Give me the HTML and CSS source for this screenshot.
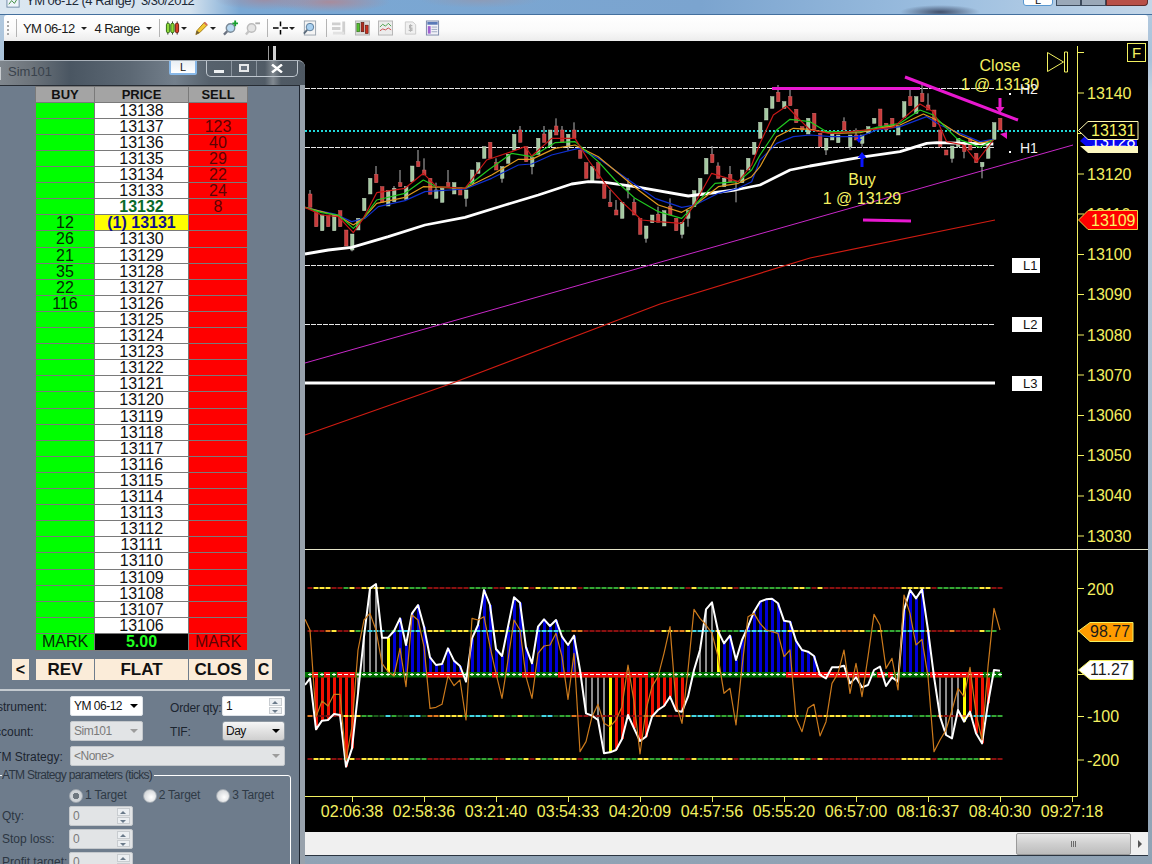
FILE: index.html
```html
<!DOCTYPE html>
<html lang="en">
<head>
    <meta charset="UTF-8">
    <title>YM 06-12 (4 Range) 3/30/2012</title>
    <link rel="stylesheet" href="styles.css">
</head>
<body>
    <div class="chart-window">
        <div class="title-bar">
            <svg class="title-icon" viewBox="0 0 16 16"><rect x="1" y="3" width="13" height="11" fill="#eef4fa" stroke="#6f8aa5"/><path d="M3 11l3-4 3 3 3-5" fill="none" stroke="#3a8a3a"/></svg>
            <span class="title-text">YM 06-12 (4 Range)&nbsp;&nbsp;3/30/2012</span>
        </div>
        <div class="toolbar">
            <span class="grip"></span>
            <span class="sep"></span>
            <span class="tb-text">YM 06-12</span><span class="caret"></span>
            <span class="tb-text tb-range">4 Range</span><span class="caret"></span>
            <span class="sep"></span>
            <svg class="icon" viewBox="0 0 16 16"><path d="M3 1v14M8 1v14M13 1v14" stroke="#333"/><rect x="1.5" y="3" width="3.5" height="10" rx="1.5" fill="#8fd83a" stroke="#2c6a10"/><rect x="6.2" y="3" width="3.5" height="10" rx="1.5" fill="#8fd83a" stroke="#2c6a10"/><rect x="11" y="3" width="3.5" height="10" rx="1.5" fill="#d8402a" stroke="#6a1608"/></svg><span class="caret caret-close"></span>
            <svg class="icon icon-gap" viewBox="0 0 16 16"><path d="M2 15l1-4 8-9 3 3-8 8z" fill="#f2c832" stroke="#a07a18"/><path d="M11 2l3 3" stroke="#d06a5a" stroke-width="2"/><path d="M2 15l1-4 3 2z" fill="#6a5a3a"/></svg><span class="caret caret-close"></span>
            <svg class="icon icon-gap" viewBox="0 0 16 16"><circle cx="8" cy="8" r="4.5" fill="#b8d8f0" stroke="#7a8a98" stroke-width="1.5"/><path d="M4.5 11.5L1 15" stroke="#6a7280" stroke-width="2.5"/><path d="M13 0v6M10 3h6" stroke="#18a030" stroke-width="2"/></svg>
            <svg class="icon icon-gap" viewBox="0 0 16 16"><circle cx="7" cy="8" r="4.5" fill="#e4e4e4" stroke="#bcbcbc" stroke-width="1.5"/><path d="M4 11.5L1 15" stroke="#c4c4c4" stroke-width="2.5"/><path d="M11 3h5" stroke="#b0b0b0" stroke-width="2"/></svg>
            <span class="sep"></span>
            <svg class="icon" viewBox="0 0 16 16"><path d="M0 8h6M10 8h6M8 1v5M8 10v5" stroke="#000" stroke-width="1.6"/></svg><span class="caret caret-close"></span>
            <svg class="icon icon-gap" viewBox="0 0 16 16"><rect x="2.5" y="0.5" width="12" height="15" fill="#f4f4f4" stroke="#9aa4ae"/><circle cx="8.5" cy="7" r="4" fill="#a8d0f0" stroke="#5a7a98"/><path d="M5.5 10L2 14" stroke="#5a6a7a" stroke-width="2"/></svg>
            <span class="sep sep-wide"></span>
            <svg class="icon" viewBox="0 0 16 16"><path d="M0 2h9v3H0zM0 7h9v3H0zM11 1h3v14h-3z" fill="#cfcfcf"/><path d="M1 12h12v3H1z" fill="#e2e2e2"/></svg>
            <svg class="icon icon-gap-8" viewBox="0 0 16 16"><rect x="0.5" y="0.5" width="15" height="15" fill="#dcdcdc" stroke="#b4b4b4"/><rect x="2" y="3" width="3" height="9" fill="#56c030" stroke="#246010" stroke-width=".6"/><rect x="6.5" y="2" width="3" height="10" fill="#b02c20" stroke="#501008" stroke-width=".6"/><rect x="11" y="5" width="3" height="9" fill="#cc3020" stroke="#501008" stroke-width=".6"/></svg>
            <svg class="icon icon-gap-8" viewBox="0 0 16 16"><rect x="0.5" y="0.5" width="15" height="15" fill="#ececec" stroke="#b4b4b4"/><path d="M2 7l3-3 3 2 3-3 3 3" fill="none" stroke="#4aa04a"/><path d="M2 11l3-2 3 1 3-2 3 2" fill="none" stroke="#c84a4a"/></svg>
            <svg class="icon icon-gap-10" viewBox="0 0 16 16"><path d="M2.5 1.5h8l3 3v10h-11z" fill="#f0f0f0" stroke="#cacaca"/><path d="M10 5.5H7v2.500h2.500v2.500H6M8 4v8" fill="none" stroke="#b4b4b4" stroke-width="1.200"/></svg>
            <svg class="icon icon-gap" viewBox="0 0 16 16"><rect x="1.500" y="0.500" width="13" height="15" fill="#f2f2f8" stroke="#7a88a8"/><rect x="2.500" y="1.500" width="11" height="3" fill="#5a7ab8"/><rect x="3" y="6" width="3" height="8" fill="#a060d0"/><path d="M7 7h6M7 9.500h6M7 12h6" stroke="#9aa6c0"/></svg>
        </div>

        <div class="chart-area">
            <svg class="chart" viewBox="4 41 1144 791" width="1144" height="791">
                <!-- ghost bars above the order window -->
                <rect x="268" y="46" width="1" height="14" fill="#9a9a9a"/>
                <rect x="273" y="46" width="3" height="14" fill="#d0d0d0"/>

                <!-- price levels -->
                <path class="level" d="M305 88.500H995M305 147.500H995M305 265.500H995M305 324.500H995"/>
                <path class="level-last" d="M305 383H995"/>
                <path class="last-price" d="M305 131H1078"/>
                <path class="trend-magenta" d="M305 363L1073 145"/>
                <path class="trend-red" d="M305 435L450 384L660 304L810 258L995 220"/>

                <g id="candles"></g>
                <g id="averages"></g>

                <!-- hand drawn marks -->
                <path class="marker" d="M772 88.500H920M905 77L1018 120M863 220L911 221"/>
                <path class="arrow-up" d="M860.500 167v-9h-3l4.500-6 4.500 6h-3v9z"/>
                <path class="arrow-up" d="M858 135v4h-2l3 4 3-4h-2v-4z"/>
                <path class="arrow-down" d="M998.500 98v9h-3l4.500 6 4.500-6h-3v-9z"/>
                <path class="arrow-down" d="M1000 134l7-2v7z"/>

                <text class="note" x="1000" y="71">Close</text>
                <text class="note" x="1000" y="90">1 @ 13130</text>
                <text class="note" x="862" y="185">Buy</text>
                <text class="note" x="862" y="204">1 @ 13129</text>

                <text class="tag" x="1020" y="94">H2</text>
                <text class="tag" x="1020" y="153">H1</text>
                <rect class="dot" x="1009" y="93" width="2" height="2"/>
                <rect class="dot" x="1009" y="151" width="2" height="2"/>
                <rect class="tag-box" x="1012" y="258" width="28" height="15"/>
                <rect class="tag-box" x="1012" y="317" width="30" height="15"/>
                <rect class="tag-box" x="1012" y="376" width="30" height="15"/>
                <text class="tag-dark" x="1023" y="270">L1</text>
                <text class="tag-dark" x="1023" y="329">L2</text>
                <text class="tag-dark" x="1023" y="388">L3</text>

                <!-- indicator pane -->
                <path class="divider" d="M305 549.500H1148"/>
                <g id="histogram"></g>
                <g id="levels"></g>
                <g id="band"></g>
                <g id="oscillator"></g>

                <!-- axes -->
                <path class="axis" d="M1077.500 46V796.500H305"/>
                <path class="axis" d="M1078 52.500h6M1078 93h6M1078 133.500h6M1078 174h6M1078 214h6M1078 254.500h6M1078 294.500h6M1078 335h6M1078 375h6M1078 415.500h6M1078 455.500h6M1078 496h6M1078 536h6M1078 588.500h6M1078 631h6M1078 674.500h6M1078 716.500h6M1078 760h6"/>
                <path class="axis" d="M352.500 796v6M424.500 796v6M496.500 796v6M568.500 796v6M640.500 796v6M712.500 796v6M784.500 796v6M856.500 796v6M928.500 796v6M1000.500 796v6M1072.500 796v6"/>

                <g class="price-labels">
                    <text x="1087" y="99">13140</text>
                    <text x="1087" y="139">13130</text>
                    <text x="1087" y="180">13120</text>
                    <text x="1087" y="220">13110</text>
                    <text x="1087" y="260">13100</text>
                    <text x="1087" y="300">13090</text>
                    <text x="1087" y="341">13080</text>
                    <text x="1087" y="381">13070</text>
                    <text x="1087" y="421">13060</text>
                    <text x="1087" y="461">13050</text>
                    <text x="1087" y="501">13040</text>
                    <text x="1087" y="542">13030</text>
                    <text x="1087" y="595">200</text>
                    <text x="1087" y="722">-100</text>
                    <text x="1087" y="766">-200</text>
                </g>
                <g class="time-labels">
                    <text x="352" y="817">02:06:38</text>
                    <text x="424" y="817">02:58:36</text>
                    <text x="496" y="817">03:21:40</text>
                    <text x="568" y="817">03:54:33</text>
                    <text x="640" y="817">04:20:09</text>
                    <text x="712" y="817">04:57:56</text>
                    <text x="784" y="817">05:55:20</text>
                    <text x="856" y="817">06:57:00</text>
                    <text x="928" y="817">08:16:37</text>
                    <text x="1000" y="817">08:40:30</text>
                    <text x="1072" y="817">09:27:18</text>
                </g>

                <!-- price flags -->
                <polygon class="flag-blue" points="1080,141 1087,134 1137,134 1137,147 1087,147"/>
                <text class="flag-text-white" x="1091" y="147">13128</text>
                <polygon class="flag-pale" points="1080,146 1087,146 1138,146 1138,153 1088,153"/>
                <polygon class="flag-black" points="1078.500,130.500 1088,121.500 1138,121.500 1138,139.500 1088,139.500"/>
                <text class="flag-text" x="1091" y="136">13131</text>
                <polygon class="flag-red" points="1078.500,220 1088,210.500 1137.500,210.500 1137.500,229.500 1088,229.500"/>
                <text class="flag-text" x="1091" y="226">13109</text>
                <polygon class="flag-orange" points="1078.500,631 1090,622.500 1133,622.500 1133,641.500 1090,641.500"/>
                <text class="flag-text-dark" x="1090" y="637">98.77</text>
                <polygon class="flag-white" points="1078.500,670 1090,660.500 1133,660.500 1133,679.500 1090,679.500"/>
                <text class="flag-text-dark" x="1090" y="675">11.27</text>

                <!-- end of data and F buttons -->
                <path class="axis" d="M1047.500 52.500v19l16-9.500zM1064.500 52h3v20h-3z"/>
                <rect class="axis" x="1127.500" y="43.500" width="18" height="18"/>
                <text class="f-label" x="1136.500" y="58">F</text>
            </svg>
        </div>

        <div class="scrollbar">
            <div class="scroll-thumb"><span></span><span></span><span></span></div>
            <span class="scroll-arrow"></span>
        </div>
    </div>

    <div class="desktop-buttons">
        <span class="desk-l">L</span>
        <span class="desk-btn"></span>
        <span class="desk-btn"></span>
        <span class="desk-close"></span>
    </div>

    <div class="order-window">
        <div class="order-title">
            <span class="order-icon"></span>
            <span class="order-name">Sim101</span>
            <span class="lock-btn">L</span>
            <div class="win-buttons">
                <span class="win-btn"><i class="win-min"></i></span>
                <span class="win-btn"><i class="win-max"></i></span>
                <span class="win-btn win-btn-close">
                    <svg viewBox="0 0 12 9" width="12" height="9"><path d="M1 0.500l10 8M11 0.500l-10 8" stroke="#fff" stroke-width="2.400"/></svg>
                </span>
            </div>
        </div>

        <div class="order-body">
            <div class="ladder">
                <div class="row row-head"><div>BUY</div><div>PRICE</div><div>SELL</div></div>
                <div class="row"><div class="buy"></div><div class="price">13138</div><div class="sell"></div></div>
                <div class="row"><div class="buy"></div><div class="price">13137</div><div class="sell">123</div></div>
                <div class="row"><div class="buy"></div><div class="price">13136</div><div class="sell">40</div></div>
                <div class="row"><div class="buy"></div><div class="price">13135</div><div class="sell">29</div></div>
                <div class="row"><div class="buy"></div><div class="price">13134</div><div class="sell">22</div></div>
                <div class="row"><div class="buy"></div><div class="price">13133</div><div class="sell">24</div></div>
                <div class="row"><div class="buy"></div><div class="price price-ask">13132</div><div class="sell">8</div></div>
                <div class="row"><div class="buy">12</div><div class="price price-pos">(1) 13131</div><div class="sell"></div></div>
                <div class="row"><div class="buy">26</div><div class="price">13130</div><div class="sell"></div></div>
                <div class="row"><div class="buy">21</div><div class="price">13129</div><div class="sell"></div></div>
                <div class="row"><div class="buy">35</div><div class="price">13128</div><div class="sell"></div></div>
                <div class="row"><div class="buy">22</div><div class="price">13127</div><div class="sell"></div></div>
                <div class="row"><div class="buy">116</div><div class="price">13126</div><div class="sell"></div></div>
                <div class="row"><div class="buy"></div><div class="price">13125</div><div class="sell"></div></div>
                <div class="row"><div class="buy"></div><div class="price">13124</div><div class="sell"></div></div>
                <div class="row"><div class="buy"></div><div class="price">13123</div><div class="sell"></div></div>
                <div class="row"><div class="buy"></div><div class="price">13122</div><div class="sell"></div></div>
                <div class="row"><div class="buy"></div><div class="price">13121</div><div class="sell"></div></div>
                <div class="row"><div class="buy"></div><div class="price">13120</div><div class="sell"></div></div>
                <div class="row"><div class="buy"></div><div class="price">13119</div><div class="sell"></div></div>
                <div class="row"><div class="buy"></div><div class="price">13118</div><div class="sell"></div></div>
                <div class="row"><div class="buy"></div><div class="price">13117</div><div class="sell"></div></div>
                <div class="row"><div class="buy"></div><div class="price">13116</div><div class="sell"></div></div>
                <div class="row"><div class="buy"></div><div class="price">13115</div><div class="sell"></div></div>
                <div class="row"><div class="buy"></div><div class="price">13114</div><div class="sell"></div></div>
                <div class="row"><div class="buy"></div><div class="price">13113</div><div class="sell"></div></div>
                <div class="row"><div class="buy"></div><div class="price">13112</div><div class="sell"></div></div>
                <div class="row"><div class="buy"></div><div class="price">13111</div><div class="sell"></div></div>
                <div class="row"><div class="buy"></div><div class="price">13110</div><div class="sell"></div></div>
                <div class="row"><div class="buy"></div><div class="price">13109</div><div class="sell"></div></div>
                <div class="row"><div class="buy"></div><div class="price">13108</div><div class="sell"></div></div>
                <div class="row"><div class="buy"></div><div class="price">13107</div><div class="sell"></div></div>
                <div class="row"><div class="buy"></div><div class="price">13106</div><div class="sell"></div></div>
                <div class="row row-foot"><div class="buy">MARK</div><div class="pnl">5.00</div><div class="sell">MARK</div></div>
            </div>

            <div class="actions">
                <button class="action action-side">&lt;</button>
                <button class="action action-rev">REV</button>
                <button class="action action-flat">FLAT</button>
                <button class="action action-clos">CLOS</button>
                <button class="action action-side action-c">C</button>
            </div>

            <div class="rule"></div>

            <div class="order-form">
                <span class="label">Instrument:</span>
                <div class="field field-white">YM 06-12<i class="drop"></i></div>
                <span class="label label-qty">Order qty:</span>
                <div class="field field-white field-spin">1<span class="spin"><i></i><i></i></span></div>

                <span class="label">Account:</span>
                <div class="field field-off">Sim101<i class="drop"></i></div>
                <span class="label label-qty label-tif">TIF:</span>
                <div class="field field-button">Day<i class="drop"></i></div>

                <span class="label">ATM Strategy:</span>
                <div class="field field-off field-wide">&lt;None&gt;<i class="drop"></i></div>
            </div>

            <fieldset class="atm">
                <legend>ATM Strategy parameters (ticks)</legend>
                <div class="radios">
                    <span class="radio radio-on">1 Target</span>
                    <span class="radio">2 Target</span>
                    <span class="radio">3 Target</span>
                </div>
                <div class="param"><span class="param-name">Qty:</span><div class="field field-off field-spin">0<span class="spin"><i></i><i></i></span></div></div>
                <div class="param"><span class="param-name">Stop loss:</span><div class="field field-off field-spin">0<span class="spin"><i></i><i></i></span></div></div>
                <div class="param"><span class="param-name">Profit target:</span><div class="field field-off field-spin">0<span class="spin"><i></i><i></i></span></div></div>
            </fieldset>
        </div>
    </div>

    <script src="chart.js"></script>
</body>
</html>
```

FILE: styles.css
```css
* {
    box-sizing: border-box;
}

body {
    margin: 0;
    width: 1152px;
    height: 864px;
    overflow: hidden;
    position: relative;
    font-family: "Liberation Sans", Arial, sans-serif;
    background: linear-gradient(180deg, #b4cbe0 0, #a9c2da 60px, #c2d2e0 90px, #8fa2b4 864px);
}

.chart-window {
    margin: 0 4px;
    height: 864px;
    display: flex;
    flex-direction: column;
}

.title-bar {
    height: 15px;
    margin: 0 -4px;
    padding-left: 6px;
    display: flex;
    align-items: flex-end;
    gap: 5px;
    overflow: hidden;
    background:
        radial-gradient(ellipse 50px 10px at 265px 0, #9a90a8 0, transparent 100%),
        radial-gradient(ellipse 60px 10px at 330px 2px, #a88c9c 0, transparent 100%),
        radial-gradient(ellipse 60px 8px at 480px 0, #8d9cb8 0, transparent 100%),
        radial-gradient(ellipse 40px 7px at 940px 12px, #41506c 0, transparent 100%),
        linear-gradient(90deg, #dbe7f1 0, #d4e2ee 190px, #7aa8d4 240px, #7ba4cf 700px, #9dbfe0 950px, #c3d6e8 1152px);
    border-bottom: 1px solid #44709e;
}

.title-icon {
    width: 15px;
    height: 15px;
    margin-bottom: 5px;
    flex: none;
}

.title-text {
    font-size: 13px;
    line-height: 14px;
    letter-spacing: -.5px;
    color: #1d2a38;
    margin-bottom: 6px;
    white-space: nowrap;
}

.toolbar {
    height: 26px;
    flex: none;
    padding-left: 3px;
    display: flex;
    align-items: center;
    background: linear-gradient(180deg, #ffffff 0, #fafafa 60%, #ececec 100%);
    border-radius: 3px 3px 0 0;
}

.grip {
    width: 2px;
    height: 15px;
    background: repeating-linear-gradient(180deg, #a8a8a8 0, #a8a8a8 2px, transparent 2px, transparent 4px);
}

.sep {
    width: 1px;
    height: 18px;
    background: #b4b4b4;
    margin: 0 5px 0 7px;
}

.sep-wide {
    margin-left: 9px;
}

.tb-text {
    font-size: 13px;
    letter-spacing: -.6px;
    color: #1a1a1a;
    margin-left: 1px;
}

.tb-range {
    margin-left: 8px;
}

.caret {
    width: 0;
    height: 0;
    margin-left: 6px;
    border-left: 3px solid transparent;
    border-right: 3px solid transparent;
    border-top: 3px solid #222;
}

.caret-close {
    margin-left: 1px;
}

.icon {
    width: 15px;
    height: 16px;
    flex: none;
}

.icon-gap {
    margin-left: 7px;
}

.icon-gap-8 {
    margin-left: 8px;
}

.icon-gap-10 {
    margin-left: 10px;
}

.chart-area {
    flex: 1;
    min-height: 0;
    background: #000;
}

.chart {
    display: block;
}

.level {
    fill: none;
    stroke: #e8e8e8;
    stroke-width: 1;
    stroke-dasharray: 5 1;
}

.level-last {
    stroke: #fff;
    stroke-width: 3;
}

.last-price {
    stroke: #20d8d8;
    stroke-width: 2;
    stroke-dasharray: 2 2;
}

.trend-magenta {
    stroke: #c828c8;
    stroke-width: 1;
}

.trend-red {
    fill: none;
    stroke: #d01c12;
    stroke-width: 1.2;
}

.marker {
    fill: none;
    stroke: #e818d0;
    stroke-width: 3;
}

.arrow-up {
    fill: #0a14ff;
}

.arrow-down {
    fill: #e818c8;
}

.note {
    font-size: 16px;
    fill: #f4f060;
    text-anchor: middle;
}

.tag {
    font-size: 14px;
    fill: #f4f4f4;
}

.tag-dark {
    font-size: 13px;
    fill: #111;
}

.dot {
    fill: #fff;
}

.tag-box {
    fill: #fff;
}

.divider {
    stroke: #e4e4c8;
    stroke-width: 1;
}

.axis {
    fill: none;
    stroke: #f2f060;
    stroke-width: 1;
}

.price-labels text {
    font-size: 16px;
    fill: #f4f060;
}

.time-labels text {
    font-size: 16px;
    fill: #f4f060;
    text-anchor: middle;
}

.f-label {
    font-size: 15px;
    fill: #f4f060;
    text-anchor: middle;
}

.flag-black {
    fill: #000;
    stroke: #fff8b0;
}

.flag-blue {
    fill: #0808f0;
}

.flag-pale {
    fill: #fdf8c0;
}

.flag-red {
    fill: #ff0000;
    stroke: #f0d040;
}

.flag-orange {
    fill: #ff9c00;
    stroke: #f4f060;
}

.flag-white {
    fill: #fff;
    stroke: #f4f060;
}

.flag-text {
    font-size: 16px;
    fill: #f8f460;
}

.flag-text-white {
    font-size: 16px;
    fill: #fff;
}

.flag-text-dark {
    font-size: 16px;
    fill: #1a1a1a;
}

.scrollbar {
    height: 24px;
    flex: none;
    position: relative;
    display: flex;
    align-items: center;
    justify-content: flex-end;
    gap: 6px;
    padding-right: 6px;
    background: #f0f0f0;
    margin-bottom: 8px;
    border-bottom: 1px solid #2a3440;
}

.scroll-thumb {
    width: 115px;
    height: 22px;
    margin-right: 1px;
    display: flex;
    align-items: center;
    justify-content: center;
    gap: 1px;
    background: linear-gradient(180deg, #e6e6e6 0, #cfcfcf 50%, #bcbcbc 100%);
    border: 1px solid #9a9a9a;
    border-radius: 2px;
}

.scroll-thumb span {
    width: 1px;
    height: 6px;
    background: #6a6a6a;
}

.scroll-arrow {
    border-top: 4px solid transparent;
    border-bottom: 4px solid transparent;
    border-left: 4px solid #555;
}

.desktop-buttons {
    position: absolute;
    top: -1px;
    left: 1023px;
    width: 125px;
    height: 7px;
    display: flex;
}

.desk-l {
    width: 30px;
    margin-right: 3px;
    background: #fff;
    border: 1px solid #5a98d0;
    border-radius: 0 0 3px 3px;
    overflow: hidden;
    font-size: 11px;
    line-height: 1px;
    text-align: center;
    color: #111;
}

.desk-btn {
    width: 25px;
    background: #9aa8b8;
    border: 1px solid #3c4a5c;
    border-top: 0;
}

.desk-close {
    flex: 1;
    background: #b85048;
    border: 1px solid #5c2c2c;
    border-top: 0;
    border-radius: 0 0 4px 0;
}

/* order window sits over the chart, its left side runs off the screen */
.order-window {
    position: absolute;
    left: -20px;
    top: 60px;
    width: 325px;
    height: 830px;
    padding-right: 5px;
    background: #98a2ac;
    border-radius: 0 7px 0 0;
    border-top: 1px solid #aab2ba;
    overflow: hidden;
}

.order-title {
    height: 24px;
    display: flex;
    align-items: center;
    position: relative;
    margin-right: -5px;
    background:
        linear-gradient(90deg, transparent 285px, rgba(255, 255, 255, .28) 293px, transparent 301px),
        linear-gradient(90deg, #8b9299 0, #6e757c 50px, #4a5662 90px, #5c6874 150px, #737f8b 195px, #56616c 230px, #4e5862 325px);
}

.order-icon {
    width: 4px;
    height: 13px;
    margin-left: 17px;
    border: 1px solid #c8ccd0;
    background: #6a7078;
}

.order-name {
    font-size: 13px;
    color: #39424c;
    margin: 0 0 3px 7px;
}

.lock-btn {
    position: absolute;
    left: 189px;
    top: -2px;
    width: 28px;
    height: 16px;
    background: linear-gradient(180deg, #e8eef4, #fff);
    border: 2px solid #88b8e8;
    border-radius: 2px;
    font-size: 11px;
    line-height: 12px;
    text-align: center;
    color: #111;
}

.win-buttons {
    position: absolute;
    left: 226px;
    top: -1px;
    width: 92px;
    height: 17px;
    display: flex;
    border: 1px solid #c0c8d0;
    border-top: 0;
    border-radius: 0 0 5px 5px;
}

.win-btn {
    width: 25px;
    display: flex;
    align-items: center;
    justify-content: center;
    border-right: 1px solid #8a949e;
}

.win-btn-close {
    flex: 1;
    border-right: 0;
}

.win-min {
    display: block;
    width: 10px;
    height: 3px;
    margin-top: 6px;
    background: #eef0f2;
}

.win-max {
    display: block;
    width: 10px;
    height: 8px;
    border: 2px solid #e6e8ea;
    background: #6a7480;
}

.order-body {
    height: 800px;
    background: #6e7c8c;
    border-top: 1px solid #262c34;
    border-right: 1px solid #1e2530;
}

.ladder {
    width: 213px;
    margin-left: 55px;
    padding: 1px;
    display: flex;
    flex-direction: column;
    gap: 1px;
    background: #7a7a7a;
    font-size: 16px;
}

.row {
    display: grid;
    grid-template-columns: 58px 93px 58px;
    column-gap: 1px;
    height: 15px;
    line-height: 15px;
    text-align: center;
}

/* the grid on screen is a little over 16px a row */
.row:nth-child(10n) {
    height: 16px;
    line-height: 16px;
}

.row-head {
    height: 15px;
    font-size: 13px;
    line-height: 15px;
    font-weight: bold;
    color: #111;
}

.row-head div {
    background: #a4a4a4;
}

.row-foot {
    height: 16px;
    line-height: 16px;
}

.buy {
    background: #00ff00;
    color: #062a06;
}

.sell {
    background: #ff0000;
    color: #5a0404;
}

.price {
    background: #fff;
    color: #111;
}

.price-ask {
    font-weight: bold;
    color: #0a6a2a;
}

.price-pos {
    font-weight: bold;
    background: #ffff00;
    color: #10108c;
}

.pnl {
    background: #000;
    color: #20ff20;
    font-weight: bold;
}

.actions {
    margin-top: 8px;
    margin-left: 32px;
    display: flex;
    gap: 1px;
}

.action {
    height: 21px;
    padding: 0;
    border: 0;
    background: #fbecd9;
    font-family: inherit;
    font-size: 17px;
    font-weight: bold;
    color: #111;
}

.action-side {
    width: 17px;
    font-size: 16px;
}

.action-rev {
    width: 58px;
    margin-left: 6px;
}

.action-flat {
    width: 93px;
}

.action-clos {
    width: 58px;
}

.action-c {
    margin-left: 7px;
}

.rule {
    height: 2px;
    width: 310px;
    margin-top: 9px;
    background: #c4cad0;
}

.order-form {
    margin-top: 5px;
    padding-left: 7px;
    display: grid;
    grid-template-columns: 83px 73px 27px 52px 63px;
    grid-auto-rows: 20px;
    row-gap: 5px;
    font-size: 12px;
    color: #1c2530;
}

.label {
    line-height: 22px;
    white-space: nowrap;
}

.label-qty {
    grid-column: 4;
    margin-top: 1px;
    letter-spacing: -.2px;
}

.label-tif {
    margin-top: 0;
}

.field {
    position: relative;
    height: 20px;
    padding-left: 3px;
    font-size: 12px;
    letter-spacing: -.5px;
    line-height: 18px;
    border-radius: 2px;
    color: #111;
}

.field-white {
    background: #fff;
    border: 1px solid #dfe3e8;
}

.field-off {
    background: #e2e4e6;
    color: #7a7a7a;
    border: 1px solid #c4c8cc;
}

.field-button {
    background: linear-gradient(180deg, #f6f6f6 0, #e2e2e2 50%, #cfcfcf 100%);
    border: 1px solid #8e98a2;
    border-radius: 3px;
}

.field-wide {
    grid-column: 2 / span 4;
}

.drop {
    position: absolute;
    right: 4px;
    top: 7px;
    border-left: 4px solid transparent;
    border-right: 4px solid transparent;
    border-top: 4px solid #000;
}

.field-off .drop {
    border-top-color: #9c9c9c;
}

.spin {
    position: absolute;
    right: 2px;
    top: 1px;
    width: 13px;
    height: 16px;
    display: flex;
    flex-direction: column;
    gap: 1px;
}

.spin i {
    flex: 1;
    position: relative;
    background: #eceff2;
    border: 1px solid #c8ccd0;
}

.spin i::after {
    content: "";
    position: absolute;
    left: 2px;
    top: 2px;
    border-left: 3px solid transparent;
    border-right: 3px solid transparent;
    border-bottom: 3px solid #6a7a8a;
}

.spin i + i::after {
    border-bottom: 0;
    border-top: 3px solid #6a7a8a;
}

.atm {
    margin: 3px 0 0 12px;
    padding: 8px 0 0 9px;
    width: 299px;
    height: 120px;
    border: 1px solid #fff;
    border-radius: 3px;
    font-size: 12px;
    color: #2c3642;
    min-width: 0;
}

.atm legend {
    margin-left: 0;
    padding: 0 2px 0 0;
    line-height: 12px;
    font-size: 12px;
    letter-spacing: -.7px;
}

.radios {
    height: 13px;
    padding-left: 67px;
    display: flex;
    font-size: 12px;
    letter-spacing: -.2px;
    line-height: 13px;
    color: #2f3a46;
}

.radio {
    width: 76px;
    padding-left: 16px;
    position: relative;
}

.radio::before {
    content: "";
    position: absolute;
    left: 0;
    top: 0;
    width: 12px;
    height: 12px;
    border-radius: 50%;
    border: 1px solid #a0a8b0;
    background: radial-gradient(circle at 60% 60%, #ffffff, #c4c8cc);
}

.radio-on::before {
    background: radial-gradient(circle, #6f7880 0, #6f7880 3px, #d0d4d8 3.500px);
}

.param {
    display: flex;
    height: 20px;
    margin-top: 3px;
    line-height: 20px;
}

.radios + .param {
    margin-top: 4px;
}

.param-name {
    width: 67px;
    white-space: nowrap;
}

.param .field {
    width: 64px;
}
```

FILE: chart.js
```js
// 4 range bars, traced from the screen. Each entry: colour, body top, body bottom, wick top, wick bottom.
// First block is in 3x units from (305,90), second block from (760,40).
var barsA = [
    ['r',312,352,300],['r',365,410],['g',375,422],['r',375,410],['g',375,422],['r',362,410],['r',420,468],['g',432,480,0,484],
    ['g',385,420],['g',325,362],['g',265,312],['r',253,278,228],['r',290,337],['g',302,348],['g',295,335,288],['r',278,290,240],
    ['g',290,328],['g',228,275],['r',215,230,180],['r',240,255,205],['r',265,313],['g',300,325,278],['g',295,337],['r',278,290,240],
    ['g',278,312],['r',292,315],['g',300,325,0,350],['g',240,280],['g',218,250],['g',170,205],['r',157,205],['r',218,240,205],
    ['g',230,265,0,278],['g',193,220],['g',133,180],['r',120,157,108],['r',170,215],['g',203,230,0,253],['g',145,193],['r',132,157,108],
    ['g',120,170],['r',108,135,85],['r',120,157,108],['g',133,170,0,182],['r',120,145,97],['r',180,205],['r',218,265],['g',230,278],
    ['r',218,265],['r',278,325],['r',337,350,300],['r',360,375,330],['g',337,385],['g',290,300,265,325],['r',337,375,325],['r',385,433],
    ['g',408,445,0,458],['g',375,398],['r',373,397,350],['g',362,408],['r',350,375,325],['r',385,422],['g',397,433,0,445],['g',362,385,0,410],
    ['g',302,350],['g',265,312],['g',205,252],['r',193,218,168],['r',228,265,217],['g',265,290],['r',253,275,228],['g',295,300,275,337],
    ['g',240,278],['g',205,240],['g',157,193],['g',97,145]
];
var barsB = [
    ['g',205,240],['g',170,205],['r',157,185,135],['g',185,205],['r',170,197,150],['r',208,248],['r',260,270],['g',235,282],
    ['r',220,268],['r',280,320],['g',295,330,0,345],['g',280,300],['g',285,308],['r',245,270,232],['g',285,320,0,330],['r',285,300,265],
    ['g',285,310,0,320],['g',260,280],['g',235,250],['r',207,258],['r',250,270],['r',235,258],['g',260,285],['g',185,232],
    ['r',170,197,150],['g',170,220],['r',160,185,132],['r',195,210,160],['r',210,260],['r',270,320],['r',330,345],['g',318,355,0,368],
    ['g',295,320],['r',310,335,0,355],['r',295,330],['r',340,368],['g',367,380,0,415],['g',315,355],['g',248,298],['r',235,270]
];

// moving averages: x,y pairs, a block from (305,90) and a block from (760,40)
var averages = [
    { color: '#ffffff', width: 2.8,
      a: [0,492,70,480,140,472,250,440,360,405,480,382,600,345,700,315,800,282,850,275,900,277,990,290,1150,318,1290,300],
      b: [0,435,90,390,150,378,300,352,420,335,500,310,530,308,700,312] },
    { color: '#1030d0', width: 1.2,
      a: [0,352,40,362,90,372,140,395,180,385,220,350,300,332,360,305,480,297,560,265,640,225,680,222,740,195,820,175,880,205,950,255,1000,290,1050,325,1130,352,1170,345,1240,310,1300,295,1340,275],
      b: [0,360,50,310,100,290,150,285,215,290,300,290,350,270,420,260,500,230,540,255,600,280,660,305,700,298] },
    { color: '#e09a20', width: 1.2,
      a: [0,352,50,365,100,378,145,405,175,385,215,340,300,322,355,290,480,295,560,255,640,208,680,208,750,175,810,165,880,200,940,250,1000,300,1060,345,1130,367,1170,345,1240,290,1300,280,1340,260],
      b: [0,380,50,290,100,265,150,268,215,280,300,278,350,265,420,255,490,222,530,240,600,285,660,310,700,300] },
    { color: '#20c820', width: 1.2,
      a: [0,352,50,368,100,375,145,415,175,385,215,330,300,310,355,270,395,290,480,295,550,240,620,190,680,200,750,158,810,155,880,215,930,270,990,325,1060,365,1130,385,1170,345,1230,280,1300,275,1340,240],
      b: [0,345,50,270,90,238,150,245,200,275,300,275,350,262,420,250,480,210,520,225,590,295,660,322,700,300] },
    { color: '#c81818', width: 1.2,
      a: [0,352,50,375,100,380,145,428,175,385,215,308,300,295,355,250,395,290,480,295,545,210,620,185,660,170,680,198,740,145,810,145,850,210,900,280,950,335,1010,390,1060,395,1130,400,1170,340,1220,250,1300,275,1340,225],
      b: [0,310,40,225,80,198,110,230,150,270,210,280,300,272,400,262,480,192,520,215,560,305,610,315,650,365,700,300] }
];

// oscillator, one value per bar, 3x units from y=570
var cci = [325,478,452,450,432,435,590,535,370,200,55,42,203,203,183,145,225,130,105,170,262,285,282,235,272,288,335,205,165,60,
    105,237,258,170,82,98,232,280,170,148,168,150,200,225,197,300,430,437,450,550,547,540,507,435,475,513,500,440,420,408,
    380,422,425,380,300,240,118,97,183,220,197,270,210,170,125,95,88,86,100,152,155,212,240,245,258,315,325,292,292,287,
    340,322,352,345,300,290,348,322,335,120,60,85,58,180,320,440,495,505,420,455,425,490,520,400,300,302];

var cciSlow = [180,440,393,408,373,373,570,470,240,150,130,180,280,305,318,235,350,135,150,230,415,412,403,318,347,330,450,145,150,
    140,230,310,385,270,150,180,320,385,250,228,225,190,260,388,250,545,515,440,403,460,470,450,410,285,395,552,420,350,320,
    250,170,400,460,300,118,145,165,190,260,370,355,465,290,140,130,160,180,185,190,260,240,445,485,415,403,498,455,340,310,
    240,370,280,380,260,133,165,295,265,360,75,130,225,208,320,545,510,480,420,355,380,292,430,510,290,115,180];

var histColors = 'nrrrrrrrggggg' + 'y' + 'bbbbbbbbbbbb' + 'n' + 'bbbbbbbbbbbbbbbbbb' + 'n' + 'gggg' + 'y' + 'rrrrrrrrrrrr' + 'nn' + 'ggg' + 'y' +
    'bbbbbbbbbbbbbbbb' + 'nnnnnnnnnnnnnn' + 'bbbbb' + 'n' + 'gggg' + 'y' + 'rrrr' + 'nn';

var dashColors = { d: '#8a1010', y: '#ffe83c', g: '#34a834', e: '#1c5c1c', o: '#e07a20', c: '#44d8e4' };

var outerLevel = 'dyyyddgydy' + 'yyygyyyggg' + 'dddddddggg' + 'gddyggydyg' + 'gyyyydgggg' + 'ggyggyyggy' + 'yggdyg' +
    'gggyydgggg' + 'gggggyygdy' + 'dddddddddd' + 'dddyyyyydg' + 'ggggggyydd';
var midLevels = {
    631: 'dddoyddygecccegccccey' + 'yygyyygcccyygccggccccgeoodddddddddddodyyooycc' + 'ccygggccccc' + 'cccyyyyyoyyyooyyggygggccccodddoddddygg',
    716: 'oddddd' + 'yyyggeecgeecceooyyyyg' + 'cccgyyegyggecceggoddddddddddd' + 'oooydddycc' + 'ccgggegccccc' + 'cgyyeyyoyyyyggyyggg' + 'ccccegggodddoocccgg'
};

var svgNS = 'http://www.w3.org/2000/svg';

function add(parent, tag, attrs) {
    var el = document.createElementNS(svgNS, tag);
    for (var k in attrs) el.setAttribute(k, attrs[k]);
    parent.appendChild(el);
    return el;
}

function barX(i) {
    return 310 + 6 * i;
}

function indY(v) {
    return 570 + v / 3;
}

function drawBars(list, start, oy, g) {
    list.forEach(function (b, n) {
        var x = barX(start + n);
        var top = oy + b[1] / 3;
        var bottom = oy + b[2] / 3;
        var wickTop = b[3] ? oy + b[3] / 3 : top;
        var wickBottom = b[4] ? oy + b[4] / 3 : bottom;
        add(g, 'line', { x1: x, x2: x, y1: wickTop, y2: wickBottom, stroke: '#b4b4b4', 'stroke-width': 1 });
        add(g, 'rect', {
            x: x - 1.5, y: top, width: 3.5, height: bottom - top,
            fill: b[0] === 'r' ? '#c83c3c' : '#a4c8a0',
            stroke: b[0] === 'r' ? '#d87070' : '#d0e0d0', 'stroke-width': 0.4
        });
    });
}

function drawAverages(g) {
    averages.forEach(function (m) {
        var pts = [];
        for (var i = 0; i < m.a.length; i += 2) pts.push((305 + m.a[i] / 3) + ',' + (90 + m.a[i + 1] / 3));
        for (var j = 0; j < m.b.length; j += 2) pts.push((760 + m.b[j] / 3) + ',' + (40 + m.b[j + 1] / 3));
        add(g, 'polyline', {
            points: pts.join(' '), fill: 'none', stroke: m.color,
            'stroke-width': m.width, 'stroke-linejoin': 'round'
        });
    });
}

function drawHistogram(g) {
    var fills = { r: '#f01000', b: '#0000d8', g: '#8c8c8c', y: '#ffff00' };
    for (var i = 0; i < cci.length; i++) {
        var c = histColors.charAt(i);
        if (!fills[c]) continue;
        var y = indY(cci[i]);
        var up = y < 672;
        add(g, 'rect', {
            x: barX(i) - 1, y: up ? y : 677, width: c === 'g' ? 2 : 3,
            height: up ? 672 - y : y - 677, fill: fills[c]
        });
    }
}

function drawLevel(g, y, colors) {
    for (var i = 0; i < colors.length; i++) {
        add(g, 'rect', { x: barX(i) - 2.5, y: y - 1, width: 5, height: 2, fill: dashColors[colors.charAt(i)] || '#34a834' });
    }
}

function drawBand(g) {
    var red = [[312, 318], [324, 330], [337, 355], [427, 463], [492, 498], [522, 535], [558, 648], [786, 870], [877, 885], [888, 893], [930, 983]];
    add(g, 'rect', { x: 305, y: 672, width: 697, height: 5.5, fill: '#007000' });
    red.forEach(function (r) {
        add(g, 'rect', { x: r[0], y: 672, width: r[1] - r[0], height: 5.5, fill: '#f00c0c' });
    });
    for (var i = 0; i < 116; i++) {
        var x = barX(i);
        var isRed = red.some(function (r) { return x >= r[0] && x <= r[1]; });
        add(g, 'rect', { x: x - 2, y: 674, width: 4, height: 1, fill: '#fff' });
        if (!isRed) add(g, 'rect', { x: x - 0.5, y: 673, width: 1, height: 3, fill: '#fff' });
    }
}

function drawOscillator(g) {
    var slow = ['305,' + indY(148)];
    var fast = ['305,' + indY(345)];
    for (var i = 0; i < cci.length; i++) {
        fast.push(barX(i) + ',' + indY(cci[i]));
        slow.push(barX(i) + ',' + indY(cciSlow[i]));
    }
    add(g, 'polyline', { points: fast.join(' '), fill: 'none', stroke: '#ffffff', 'stroke-width': 2, 'stroke-linejoin': 'round' });
    add(g, 'polyline', { points: slow.join(' '), fill: 'none', stroke: '#cc7a1c', 'stroke-width': 1.2, 'stroke-linejoin': 'round' });
}

var candles = document.getElementById('candles');
drawBars(barsA, 0, 90, candles);
drawBars(barsB, 76, 40, candles);
drawAverages(document.getElementById('averages'));
drawHistogram(document.getElementById('histogram'));

var levels = document.getElementById('levels');
drawLevel(levels, 588, outerLevel);
drawLevel(levels, 631, midLevels[631]);
drawLevel(levels, 716, midLevels[716]);
drawLevel(levels, 759, outerLevel);

drawBand(document.getElementById('band'));
drawOscillator(document.getElementById('oscillator'));
```
